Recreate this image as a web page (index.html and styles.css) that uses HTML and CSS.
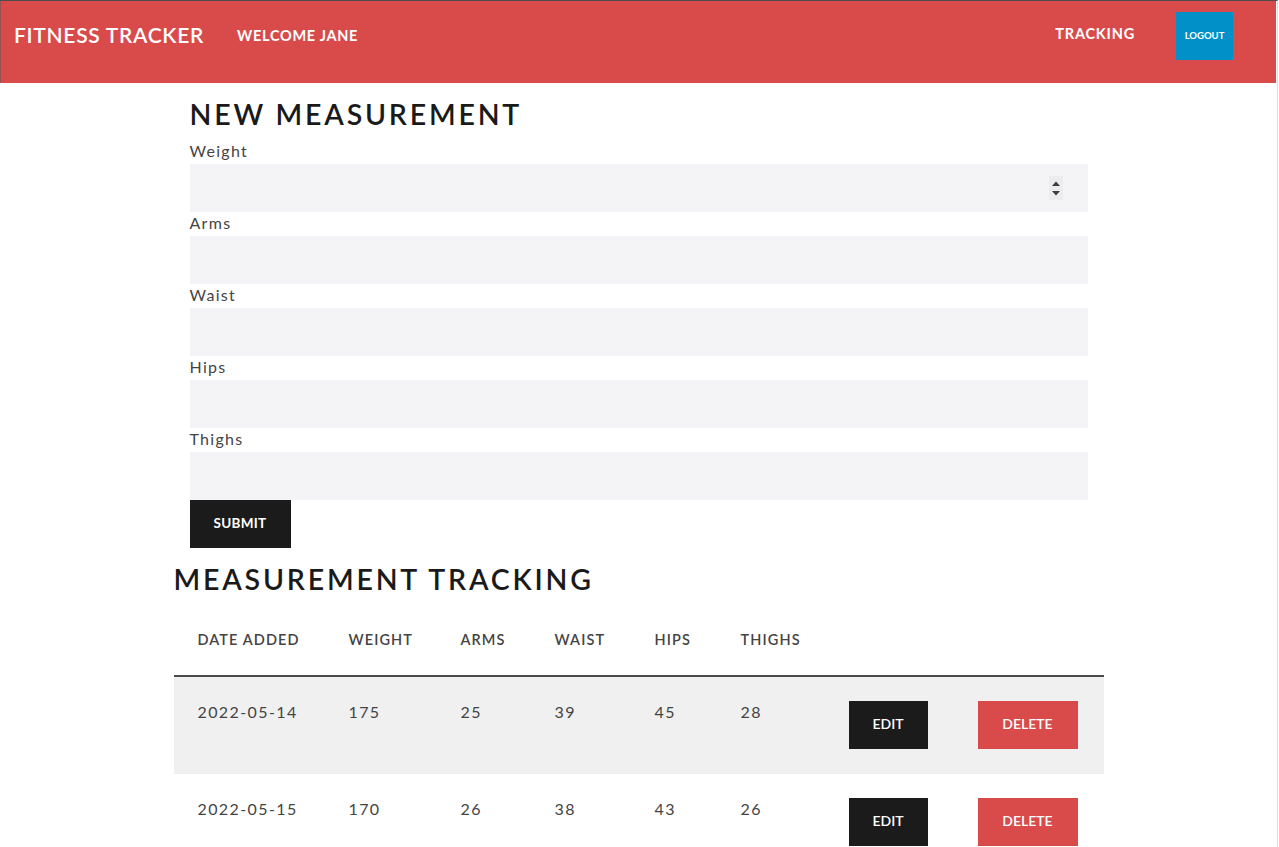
FILE: index.html
```html
<!DOCTYPE html>
<html lang="en">
<head>
<meta charset="utf-8">
<title>Fitness Tracker</title>
<link rel="stylesheet" href="styles.css">
</head>
<body>
<div class="page">
  <header class="topbar">
    <div class="brand">FITNESS TRACKER</div>
    <div class="welcome">WELCOME JANE</div>
    <nav class="nav">
      <a class="nav-link" href="#">TRACKING</a>
      <button class="logout">LOGOUT</button>
    </nav>
  </header>

  <main class="main">
    <section class="form-section">
      <h1 class="title">NEW MEASUREMENT</h1>
      <form class="form">
        <label class="label">Weight</label>
        <div class="field">
          <input class="input" type="text">
          <span class="spinner">
            <svg width="14" height="24" viewBox="0 0 14 24"><path d="M3 10 L7 5.5 L11 10 Z" fill="#3c3c3c"/><path d="M3 15 L7 19.5 L11 15 Z" fill="#3c3c3c"/></svg>
          </span>
        </div>
        <label class="label">Arms</label>
        <div class="field"><input class="input" type="text"></div>
        <label class="label">Waist</label>
        <div class="field"><input class="input" type="text"></div>
        <label class="label">Hips</label>
        <div class="field"><input class="input" type="text"></div>
        <label class="label">Thighs</label>
        <div class="field"><input class="input" type="text"></div>
        <button class="submit" type="button">SUBMIT</button>
      </form>
    </section>

    <section class="tracking">
      <h2 class="title title-wide">MEASUREMENT TRACKING</h2>
      <table class="table">
        <colgroup>
          <col class="c-date"><col class="c-weight"><col class="c-arms"><col class="c-waist"><col class="c-hips"><col class="c-thighs"><col class="c-edit"><col class="c-del">
        </colgroup>
        <thead>
          <tr>
            <th>DATE ADDED</th><th>WEIGHT</th><th>ARMS</th><th>WAIST</th><th>HIPS</th><th>THIGHS</th><th></th><th></th>
          </tr>
        </thead>
        <tbody>
          <tr class="shaded">
            <td>2022-05-14</td><td>175</td><td>25</td><td>39</td><td>45</td><td>28</td>
            <td><button class="btn btn-edit">EDIT</button></td>
            <td><button class="btn btn-delete">DELETE</button></td>
          </tr>
          <tr>
            <td>2022-05-15</td><td>170</td><td>26</td><td>38</td><td>43</td><td>26</td>
            <td><button class="btn btn-edit">EDIT</button></td>
            <td><button class="btn btn-delete">DELETE</button></td>
          </tr>
        </tbody>
      </table>
    </section>
  </main>
</div>
</body>
</html>
```
FILE: styles.css
```css
* { box-sizing: border-box; }
html, body { margin: 0; padding: 0; background: #fff; }
body {
  font-family: "Lato", "Noto Sans", sans-serif;
  color: #1b1b1b;
  overflow: hidden;
  height: 847px;
}
.page {
  width: 1278px;
  min-height: 847px;
  border-top: 1px solid #4d4d4d;
  border-right: 1px solid #dedede;
}
.topbar {
  height: 82px;
  background: #d94b4b;
  display: flex;
  align-items: flex-start;
  padding: 11px 43px 0 13px;
  color: #fff;
  border-left: 1px solid #9a5050;
  margin-right: 1px;
}
.brand {
  height: 44px;
  display: flex;
  align-items: center;
  font-size: 21px;
  font-weight: 600;
  letter-spacing: 0.7px;
}
.welcome {
  height: 46px;
  display: flex;
  align-items: center;
  margin-left: 33px;
  font-size: 14.5px;
  font-weight: 700;
  letter-spacing: 0.7px;
}
.nav {
  margin-left: auto;
  display: flex;
  align-items: flex-start;
}
.nav-link {
  color: #fff;
  text-decoration: none;
  font-size: 14.5px;
  font-weight: 700;
  letter-spacing: 0.8px;
  height: 42px;
  display: flex;
  align-items: center;
}
.logout {
  margin-left: 41px;
  width: 57px;
  height: 48px;
  padding: 0 0 2px;
  border: 0;
  background: #0190c7;
  color: #fff;
  font-family: inherit;
  font-size: 9.5px;
  font-weight: 700;
  cursor: pointer;
}
.main {
  display: flex;
  flex-direction: column;
  align-items: center;
}
.form-section { width: 898px; }
.title {
  margin: 14px 0 9px;
  font-size: 28.5px;
  line-height: 34px;
  font-weight: 600;
  letter-spacing: 2.8px;
  color: #1a1a1a;
}
.form { display: flex; flex-direction: column; }
.label {
  display: block;
  height: 24px;
  line-height: 22px;
  font-size: 16px;
  letter-spacing: 1.3px;
  color: #444;
}
.field { position: relative; }
.input {
  display: block;
  width: 100%;
  height: 48px;
  border: 0;
  background: #f4f4f6;
  font-family: inherit;
  font-size: 16px;
  padding: 0 16px;
  outline: none;
}
.spinner {
  position: absolute;
  right: 25px;
  top: 12px;
  width: 14px;
  height: 24px;
  background: #ececee;
  display: block;
}
.spinner svg { display: block; }
.submit {
  align-self: flex-start;
  width: 101px;
  height: 48px;
  border: 0;
  background: #1b1b1b;
  color: #fff;
  font-family: inherit;
  font-size: 13.5px;
  font-weight: 700;
  letter-spacing: 0.3px;
  padding: 0 0 2px;
}
.tracking { width: 930px; }
.title-wide { margin-top: 14px; margin-bottom: 8px; }
.table {
  width: 930px;
  border-collapse: collapse;
  table-layout: fixed;
}
.c-date { width: 151px; }
.c-weight { width: 112px; }
.c-arms { width: 94px; }
.c-waist { width: 100px; }
.c-hips { width: 86px; }
.c-thighs { width: 108px; }
.c-edit { width: 129px; }
.c-del { width: 150px; }
.table th {
  text-align: left;
  padding: 24px 0 24px 24px;
  height: 72px;
  font-size: 14.5px;
  font-weight: 600;
  letter-spacing: 1.1px;
  color: #444;
  border-bottom: 2px solid #4a4a4a;
  line-height: 22px;
  vertical-align: middle;
}
.table td {
  padding: 24px 0 25px 24px;
  vertical-align: top;
  font-size: 16px;
  letter-spacing: 1.4px;
  color: #444;
  line-height: 22px;
}
.shaded td { background: #f0f0f0; }
.btn {
  height: 48px;
  border: 0;
  padding: 0 0 3px;
  color: #fff;
  font-family: inherit;
  font-size: 14px;
  font-weight: 600;
  display: block;
}
.btn-edit { width: 79px; background: #1b1b1b; }
.btn-delete { width: 100px; background: #d94b4b; }
```
